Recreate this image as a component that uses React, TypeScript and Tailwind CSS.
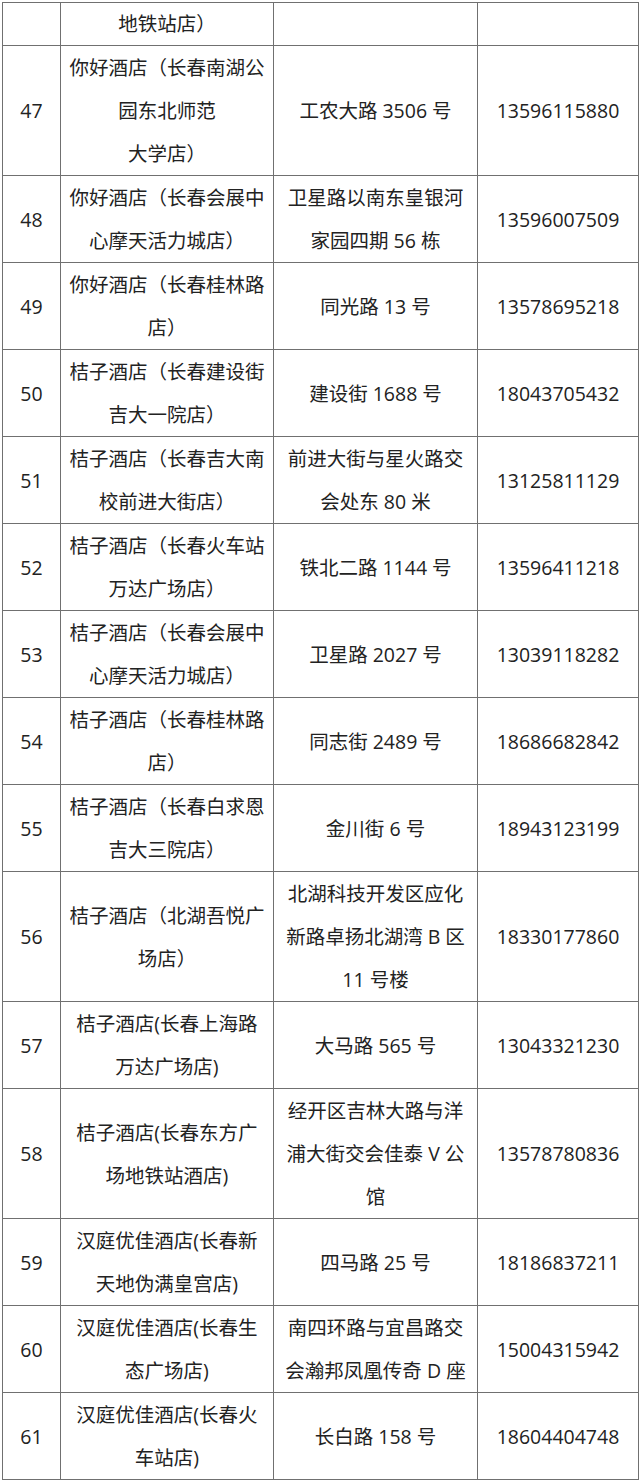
type Row = {
  no: string;
  name: string[];
  addr: string[];
  phone: string;
};

const rows: Row[] = [
  { no: "", name: ["地铁站店）"], addr: [""], phone: "" },
  { no: "47", name: ["你好酒店（长春南湖公", "园东北师范", "大学店）"], addr: ["工农大路 3506 号"], phone: "13596115880" },
  { no: "48", name: ["你好酒店（长春会展中", "心摩天活力城店）"], addr: ["卫星路以南东皇银河", "家园四期 56 栋"], phone: "13596007509" },
  { no: "49", name: ["你好酒店（长春桂林路", "店）"], addr: ["同光路 13 号"], phone: "13578695218" },
  { no: "50", name: ["桔子酒店（长春建设街", "吉大一院店）"], addr: ["建设街 1688 号"], phone: "18043705432" },
  { no: "51", name: ["桔子酒店（长春吉大南", "校前进大街店）"], addr: ["前进大街与星火路交", "会处东 80 米"], phone: "13125811129" },
  { no: "52", name: ["桔子酒店（长春火车站", "万达广场店）"], addr: ["铁北二路 1144 号"], phone: "13596411218" },
  { no: "53", name: ["桔子酒店（长春会展中", "心摩天活力城店）"], addr: ["卫星路 2027 号"], phone: "13039118282" },
  { no: "54", name: ["桔子酒店（长春桂林路", "店）"], addr: ["同志街 2489 号"], phone: "18686682842" },
  { no: "55", name: ["桔子酒店（长春白求恩", "吉大三院店）"], addr: ["金川街 6 号"], phone: "18943123199" },
  { no: "56", name: ["桔子酒店（北湖吾悦广", "场店）"], addr: ["北湖科技开发区应化", "新路卓扬北湖湾 B 区", "11 号楼"], phone: "18330177860" },
  { no: "57", name: ["桔子酒店(长春上海路", "万达广场店)"], addr: ["大马路 565 号"], phone: "13043321230" },
  { no: "58", name: ["桔子酒店(长春东方广", "场地铁站酒店)"], addr: ["经开区吉林大路与洋", "浦大街交会佳泰 V 公", "馆"], phone: "13578780836" },
  { no: "59", name: ["汉庭优佳酒店(长春新", "天地伪满皇宫店)"], addr: ["四马路 25 号"], phone: "18186837211" },
  { no: "60", name: ["汉庭优佳酒店(长春生", "态广场店)"], addr: ["南四环路与宜昌路交", "会瀚邦凤凰传奇 D 座"], phone: "15004315942" },
  { no: "61", name: ["汉庭优佳酒店(长春火", "车站店)"], addr: ["长白路 158 号"], phone: "18604404748" },
];

function Lines({ lines }: { lines: string[] }) {
  return (
    <>
      {lines.map((l, i) => (
        <div key={i} className="whitespace-nowrap">
          {l || "\u00a0"}
        </div>
      ))}
    </>
  );
}

export default function App() {
  return (
    <div className="min-h-[1483px] w-[640px] bg-white pl-[2px] pt-[2px] font-['Open_Sans','Noto_Sans_CJK_SC',sans-serif] text-[19.5px] leading-[43px] text-[#222]">
      <table className="w-[636px] table-fixed border-collapse">
        <colgroup>
          <col className="w-[58px]" />
          <col className="w-[213px]" />
          <col className="w-[204px]" />
          <col className="w-[161px]" />
        </colgroup>
        <tbody>
          {rows.map((r, i) => (
            <tr key={i} className={i === 0 ? "leading-[42px]" : ""}>
              <td className="border border-[#707070] p-0 text-center align-middle">{r.no}</td>
              <td className="border border-[#707070] p-0 text-center align-middle">
                <Lines lines={r.name} />
              </td>
              <td className="border border-[#707070] p-0 text-center align-middle">
                <Lines lines={r.addr} />
              </td>
              <td className="border border-[#707070] p-0 text-center align-middle">{r.phone}</td>
            </tr>
          ))}
        </tbody>
      </table>
    </div>
  );
}
